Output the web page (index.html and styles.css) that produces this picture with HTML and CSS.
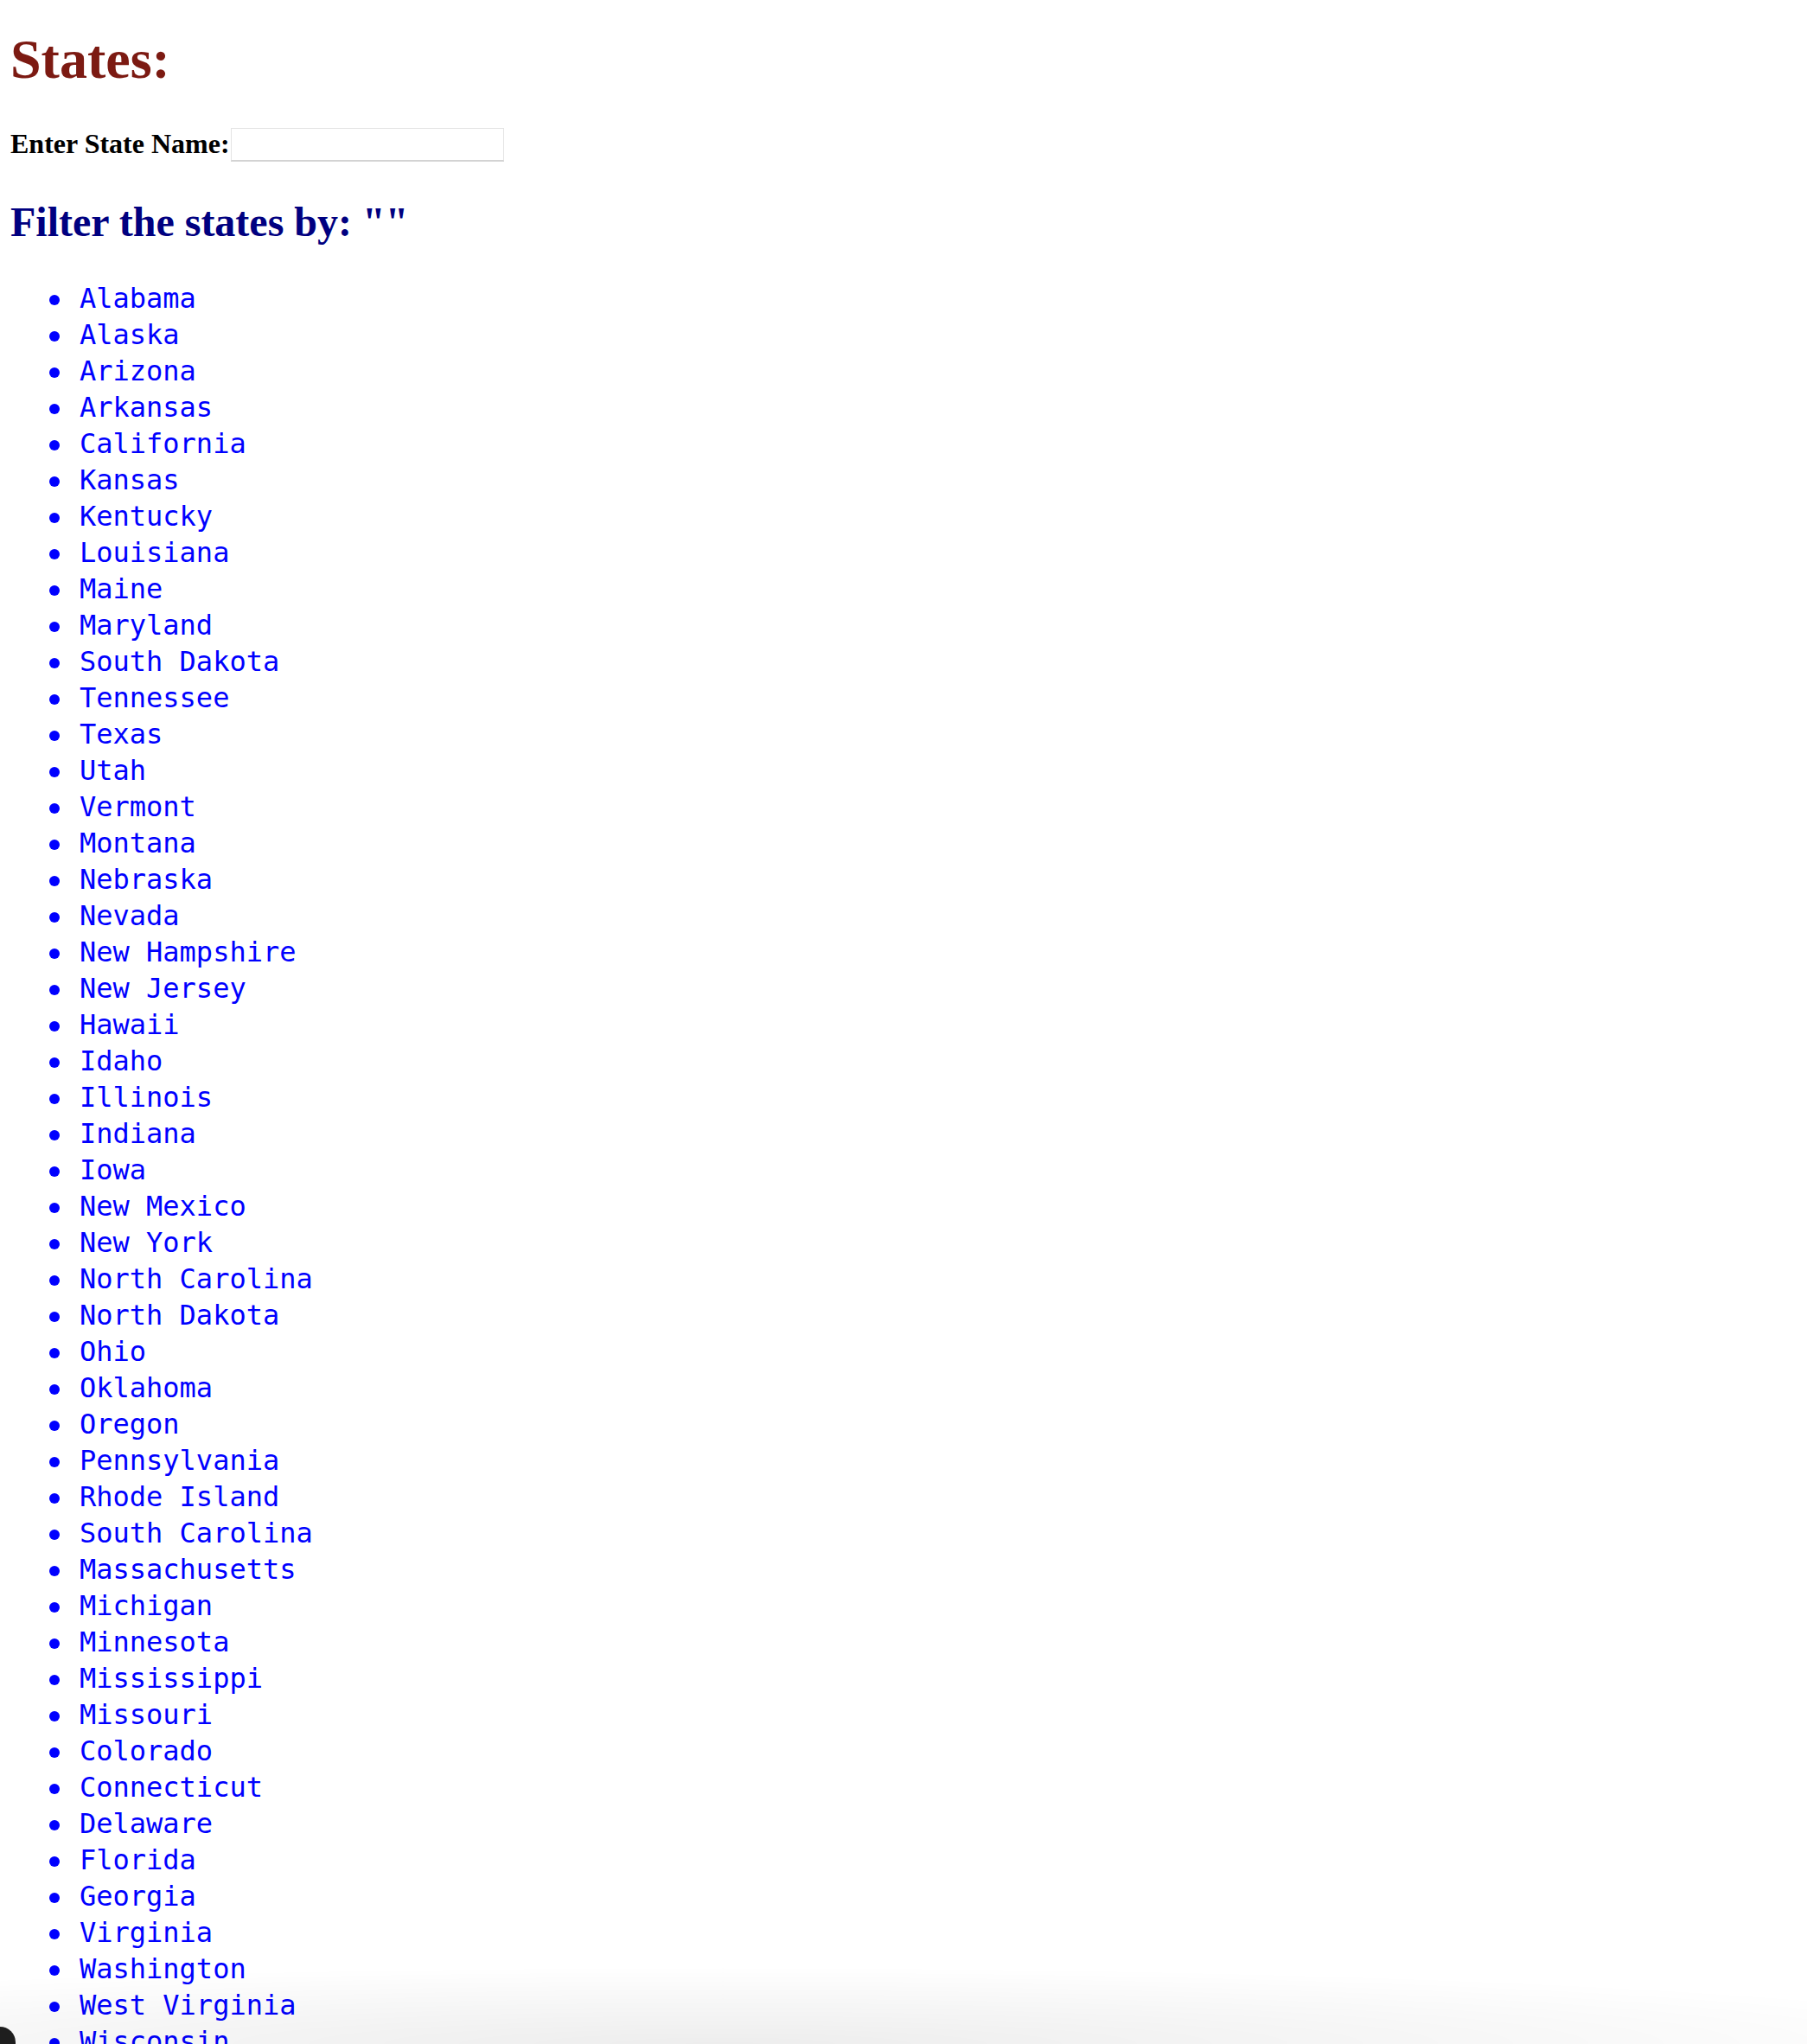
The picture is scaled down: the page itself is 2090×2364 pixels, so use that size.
FILE: index.html
```html
<!DOCTYPE html>
<html lang="en">
<head>
<meta charset="utf-8">
<title>States</title>
<link rel="stylesheet" href="styles.css">
</head>
<body>
<h1 class="title">States:</h1>
<div class="search-row">
  <label class="search-label" for="state">Enter State Name:</label>
  <input class="search-input" id="state" type="text">
</div>
<h2 class="filter-title">Filter the states by: ""</h2>
<ul class="state-list">
  <li>Alabama</li>
  <li>Alaska</li>
  <li>Arizona</li>
  <li>Arkansas</li>
  <li>California</li>
  <li>Kansas</li>
  <li>Kentucky</li>
  <li>Louisiana</li>
  <li>Maine</li>
  <li>Maryland</li>
  <li>South Dakota</li>
  <li>Tennessee</li>
  <li>Texas</li>
  <li>Utah</li>
  <li>Vermont</li>
  <li>Montana</li>
  <li>Nebraska</li>
  <li>Nevada</li>
  <li>New Hampshire</li>
  <li>New Jersey</li>
  <li>Hawaii</li>
  <li>Idaho</li>
  <li>Illinois</li>
  <li>Indiana</li>
  <li>Iowa</li>
  <li>New Mexico</li>
  <li>New York</li>
  <li>North Carolina</li>
  <li>North Dakota</li>
  <li>Ohio</li>
  <li>Oklahoma</li>
  <li>Oregon</li>
  <li>Pennsylvania</li>
  <li>Rhode Island</li>
  <li>South Carolina</li>
  <li>Massachusetts</li>
  <li>Michigan</li>
  <li>Minnesota</li>
  <li>Mississippi</li>
  <li>Missouri</li>
  <li>Colorado</li>
  <li>Connecticut</li>
  <li>Delaware</li>
  <li>Florida</li>
  <li>Georgia</li>
  <li>Virginia</li>
  <li>Washington</li>
  <li>West Virginia</li>
  <li>Wisconsin</li>
  <li>Wyoming</li>
</ul>
<div class="bottom-shade"></div>
<div class="corner-blob"></div>
</body>
</html>
```

FILE: styles.css
```css
html, body {
  background: #ffffff;
}

body {
  margin: 0;
  padding: 0 0 0 12px;
  font-family: "Liberation Serif", "Times New Roman", serif;
}

.title {
  margin: 31.5px 0 0;
  font-family: "Liberation Serif", "Times New Roman", serif;
  font-weight: bold;
  font-size: 64px;
  line-height: normal;
  color: #7c1a12;
}

.search-row {
  display: flex;
  align-items: flex-start;
  gap: 1px;
  margin-top: 42.5px;
}

.search-label {
  font-family: "Liberation Serif", "Times New Roman", serif;
  font-weight: bold;
  font-size: 32px;
  line-height: normal;
  color: #000000;
}

.search-input {
  box-sizing: border-box;
  width: 316px;
  height: 38px;
  margin: 0;
  padding: 0 6px;
  border: 1px solid #e4e4e4;
  border-bottom-color: #d2d2d2;
  box-shadow: 0 1px 0 #d6d6d6;
  background: #ffffff;
  font-size: 26px;
  outline: none;
}

.filter-title {
  margin: 42.6px 0 40.2px;
  font-family: "Liberation Serif", "Times New Roman", serif;
  font-weight: bold;
  font-size: 48px;
  line-height: normal;
  color: #000080;
}

.state-list {
  margin: 0;
  padding: 0 0 0 80px;
  list-style: none;
  font-family: "DejaVu Sans Mono", "Liberation Mono", monospace;
  font-size: 32px;
  line-height: 42px;
  color: #0000ff;
}

.state-list li {
  position: relative;
}

.state-list li::before {
  content: "";
  position: absolute;
  left: -35.5px;
  top: 17.5px;
  width: 12px;
  height: 12px;
  border-radius: 50%;
  background: #0000ff;
}

.bottom-shade {
  position: fixed;
  left: 0;
  right: 0;
  bottom: 0;
  height: 90px;
  pointer-events: none;
  background: radial-gradient(ellipse 75% 100% at 40% 100%, rgba(0, 0, 0, 0.07), rgba(0, 0, 0, 0) 100%);
}

.corner-blob {
  position: fixed;
  left: -10px;
  bottom: -12px;
  width: 28px;
  height: 32px;
  border-radius: 0 18px 0 0;
  background: #1e1e1e;
  pointer-events: none;
}
```
